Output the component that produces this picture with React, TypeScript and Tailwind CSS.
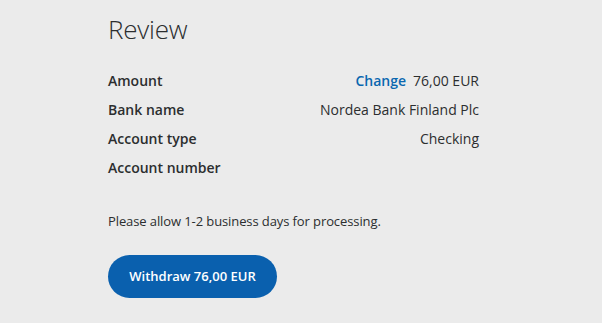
import React from 'react';

const rows: { label: string; value?: string; change?: boolean }[] = [
  { label: 'Amount', value: '76,00 EUR', change: true },
  { label: 'Bank name', value: 'Nordea Bank Finland Plc' },
  { label: 'Account type', value: 'Checking' },
  { label: 'Account number' },
];

export default function App() {
  return (
    <div className="w-[602px] h-[323px] bg-[#ebebeb] overflow-hidden font-['Open_Sans',sans-serif] text-[#2c2e2f]">
      <div className="w-[371px] ml-[108px] pt-[12px]">
        <h1 className="text-[26px] font-light leading-[34px] tracking-[-0.2px] text-[#2c2e2f]">Review</h1>

        <div className="mt-[20px] flex flex-col">
          {rows.map((row) => (
            <div key={row.label} className="h-[29px] flex items-center justify-between text-[14px]">
              <span className="font-semibold">{row.label}</span>
              {row.value && (
                <span className="flex items-center gap-[7px]">
                  {row.change && <span className="font-semibold text-[#0a67b0]">Change</span>}
                  <span>{row.value}</span>
                </span>
              )}
            </div>
          ))}
        </div>

        <p className="mt-[29px] text-[13px] leading-[20px] tracking-[-0.1px]">Please allow 1-2 business days for processing.</p>

        <button className="mt-[24px] h-[43px] w-[169px] rounded-full bg-[#0a60ae] text-white text-[13px] font-semibold">
          Withdraw 76,00 EUR
        </button>
      </div>
    </div>
  );
}
